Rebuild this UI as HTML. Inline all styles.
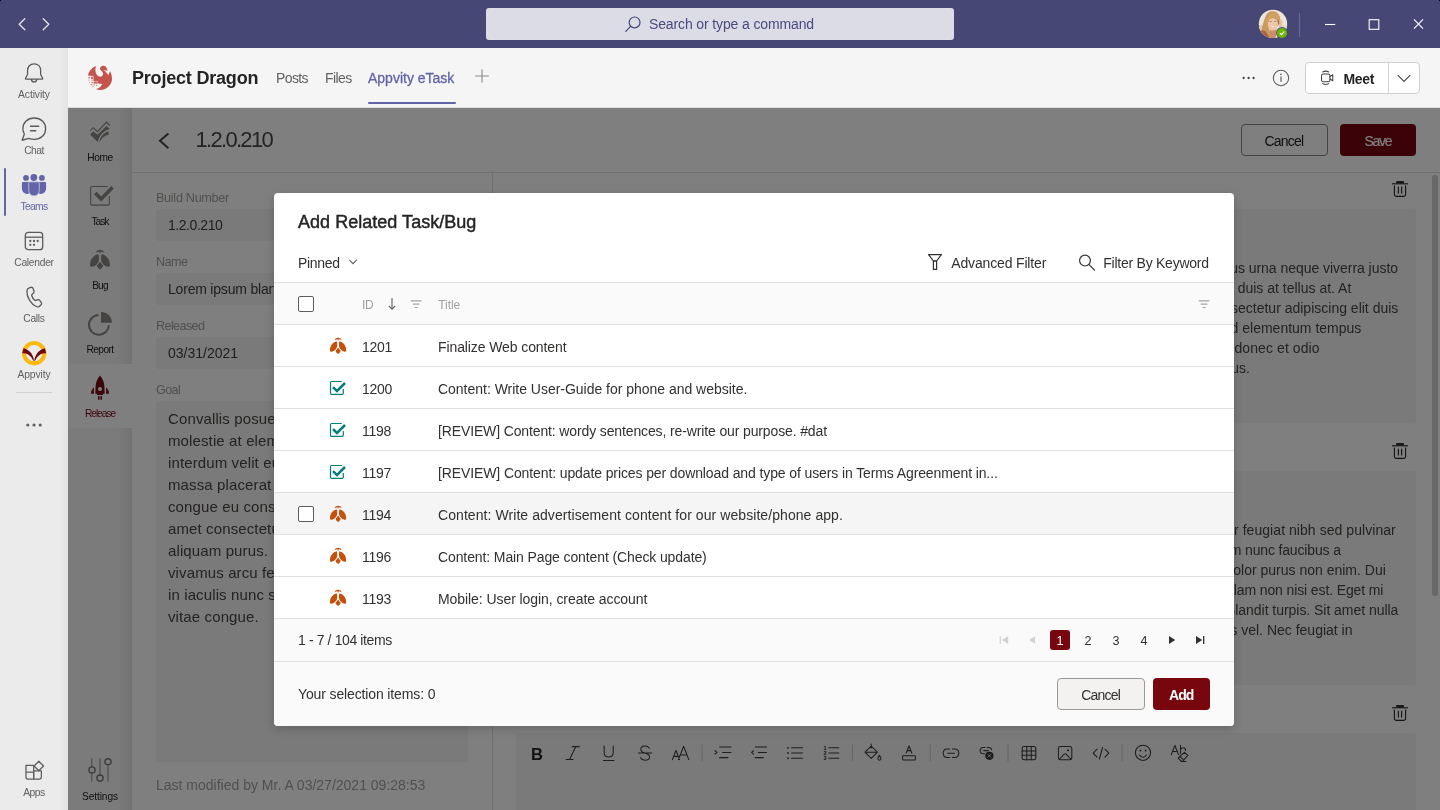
<!DOCTYPE html>
<html>
<head>
<meta charset="utf-8">
<title>Project Dragon</title>
<style>
*{box-sizing:border-box;margin:0;padding:0}
html,body{width:1440px;height:810px;overflow:hidden;background:#f5f5f5}
body{font-family:"Liberation Sans",sans-serif;color:#252423;position:relative}
body>div{will-change:transform}
.abs{position:absolute}
.t{position:absolute;white-space:nowrap;line-height:1}
svg{position:absolute;overflow:visible}
/* top bar */
#top{position:absolute;left:0;top:0;width:1440px;height:48px;background:#464775}
#search{position:absolute;left:486px;top:8px;width:468px;height:32px;background:#dcdce7;border-radius:3px}
/* left rail */
#rail{position:absolute;left:0;top:48px;width:68px;height:762px;background:linear-gradient(90deg,#ebebeb 0,#ebebeb 60px,#e3e3e3 68px)}
.rl{position:absolute;left:0;width:68px;text-align:center;font-size:10.3px;color:#616161;line-height:1;letter-spacing:-0.1px;margin-top:1.9px}
/* channel header */
#chan{position:absolute;left:68px;top:48px;width:1372px;height:60px;background:#f5f5f5}
/* app */
#app{position:absolute;left:68px;top:108px;width:1372px;height:702px;background:#fff;overflow:hidden;color:#403e3d}
#side{position:absolute;left:0;top:0;width:64px;height:702px;background:linear-gradient(90deg,#f6f6f6 0,#f6f6f6 50px,#e4e4e4 64px)}
.sl{position:absolute;left:0;width:64px;text-align:center;font-size:10.2px;color:#252423;line-height:1;letter-spacing:-0.4px;margin-top:2.6px}
#overlay{position:absolute;left:68px;top:108px;width:1372px;height:702px;background:rgba(0,0,0,0.5)}
.inp{position:absolute;left:88px;width:312px;height:32px;background:#f4f4f4;border-radius:3px}
.lbl{position:absolute;left:88px;font-size:12.6px;color:#a3a19f;line-height:1;white-space:nowrap}
.card{position:absolute;left:448px;width:900px;background:#f5f5f5;border-radius:3px}
/* modal */
#modal{position:absolute;left:274px;top:193px;width:960px;height:533px;background:#fff;border-radius:4px;box-shadow:0 3px 10px rgba(0,0,0,0.19);overflow:hidden}
.row{position:absolute;left:0;width:960px;height:42px;border-bottom:1px solid #e0e0e0;background:#fff}
.row .id{position:absolute;left:88px;top:14.9px;font-size:14px;line-height:1;color:#323130}
.row .ti{position:absolute;left:164px;top:14.9px;font-size:14px;line-height:1;color:#323130;white-space:nowrap}
.ct{font-size:14px;color:#484644}
.pg{top:442px;width:20px;text-align:center;font-size:12.6px;color:#323130}
</style>
</head>
<body>
<!-- TOP BAR -->
<div id="top">
  <div class="abs" style="left:0;top:0;width:1px;height:1px;background:#000"></div><div class="abs" style="left:1439px;top:0;width:1px;height:1px;background:#000"></div>
  <svg style="left:0;top:0" width="70" height="48" fill="none" stroke="#e6e6f0" stroke-width="1.3" stroke-linecap="round" stroke-linejoin="round"><path d="M24.8 18.8 L19.2 24.3 L24.8 29.8"/><path d="M43.2 18.8 L48.8 24.3 L43.2 29.8"/></svg>
  <div id="search">
    <svg style="left:138px;top:7px" width="20" height="20" fill="none" stroke="#464775" stroke-width="1.2" stroke-linecap="round"><circle cx="10.6" cy="7.4" r="5.4"/><path d="M6.6 11.4 L1.8 16.3"/></svg>
    <div class="t" style="left:163px;top:9px;font-size:14px;color:#484a7c;letter-spacing:-0.13px">Search or type a command</div>
  </div>
  <!-- avatar -->
  <svg style="left:1255px;top:6px" width="36" height="36" viewBox="0 0 36 36"><defs><clipPath id="avc"><circle cx="18" cy="17.9" r="14.2"/></clipPath></defs>
    <g clip-path="url(#avc)"><rect x="0" y="0" width="36" height="36" fill="#ece5da"/><rect x="0" y="19" width="13" height="17" fill="#dbccb6"/><rect x="24" y="19" width="12" height="17" fill="#e4d8c8"/>
    <ellipse cx="17.6" cy="13.6" rx="7.8" ry="8.4" fill="#c6935a"/>
    <path d="M10.4 11 C8.6 15 7.4 20 6.6 24.4 C7.4 28 10 31.4 14 32.6 L18 32 C15 28 13.4 22 13.6 16 Z" fill="#c9985c"/>
    <path d="M3 27 C5 24.4 8 23.6 10.4 25 C12 27 13.4 30 15 33 L3 33 Z" fill="#a9663d"/>
    <path d="M21 22 C22 26 21.6 29 20.4 32.4 L15 32.6 C14 28 14.6 25 15.4 22 Z" fill="#c98f6c"/>
    <ellipse cx="17.9" cy="18.2" rx="5" ry="6.3" fill="#edc5a8"/>
    <path d="M10.6 17.6 C10.4 10.6 15 6 19.4 6.2 C23.4 6.6 25.4 10.6 24.2 16.4 C23 12.6 20.4 11 17.6 11.4 C14.6 11.8 13 14.2 12.6 18.4 C12.2 20.6 11.4 22.6 10.6 23.6 Z" fill="#d2a063"/>
    <path d="M24.6 13.6 C26.6 13 27.8 14.6 27.4 17 C27.2 19.4 26.4 21.4 24.8 22 C23.8 20 23.8 16.4 24.6 13.6 Z" fill="#e8bda0"/>
    <path d="M23.2 14.6 C24 15.6 24 17.4 23.4 18.4" stroke="#7a4a34" stroke-width="0.7" fill="none"/>
    <ellipse cx="15.6" cy="15.5" rx="1.2" ry="0.6" fill="#9c8672"/><ellipse cx="20.2" cy="15.5" rx="1.2" ry="0.6" fill="#9c8672"/>
    <ellipse cx="17.9" cy="20.6" rx="1.7" ry="0.6" fill="#f7eee8"/></g>
    <circle cx="27" cy="27" r="5.9" fill="#464775"/><circle cx="27" cy="27" r="5.1" fill="#6bb700"/>
    <path d="M25.2 27.3 L26.5 28.6 L28.9 26" fill="none" stroke="#fff" stroke-width="1.2" stroke-linecap="round" stroke-linejoin="round"/></svg>
  <div class="abs" style="left:1299px;top:13px;width:1px;height:24px;background:#6b6c91"></div>
  <svg style="left:1320px;top:14px" width="110" height="20" fill="none" stroke="#fff" stroke-width="1.1"><path d="M5 10.5 H15.2"/><rect x="49.2" y="5.7" width="9.6" height="9.6"/><path d="M94 5.4 L103 14.6 M103 5.4 L94 14.6"/></svg>
</div>
<!-- LEFT RAIL -->
<div id="rail">
  <!-- coordinates inside rail: y = pageY-48 -->
  <!-- Activity bell -->
  <svg style="left:22.9px;top:13.6px" width="22.2" height="24.42" viewBox="0 0 20 22" fill="none" stroke="#5a5a5a" stroke-width="1.15" stroke-linejoin="round" stroke-linecap="round"><path d="M10 1.6 C6.3 1.6 4.1 4.3 4.1 7.6 V11.2 L2.3 14.6 C2.1 15.1 2.4 15.5 2.9 15.5 H17.1 C17.6 15.5 17.9 15.1 17.7 14.6 L15.9 11.2 V7.6 C15.9 4.3 13.7 1.6 10 1.6 Z"/><path d="M7.6 15.8 C7.8 17.1 8.8 17.9 10 17.9 C11.2 17.9 12.2 17.1 12.4 15.8"/></svg>
  <div class="rl" style="top:40px">Activity</div>
  <!-- Chat -->
  <svg style="left:18.95px;top:67.65px" width="30" height="30" viewBox="0 0 24 24" fill="none" stroke="#5a5a5a" stroke-width="1.05" stroke-linejoin="round" stroke-linecap="round"><path d="M12.2 1.6 C6.9 1.6 3.1 5.3 3.1 10.1 C3.1 11.7 3.5 13.1 4.3 14.4 L2.5 19.4 L7.8 17.9 C9.1 18.5 10.6 18.7 12.2 18.7 C17.5 18.7 21.3 15 21.3 10.1 C21.3 5.3 17.5 1.6 12.2 1.6 Z"/><path d="M9.2 8.2 H15.8 M9.2 11.8 H13.4"/></svg>
  <div class="rl" style="top:96px;letter-spacing:-0.55px">Chat</div>
  <!-- Teams active -->
  <div class="abs" style="left:4px;top:120px;width:2px;height:48px;background:#6264a7;border-radius:1px"></div>
  <svg style="left:21px;top:125px" width="26" height="24" fill="#6264a7"><circle cx="12.85" cy="4.5" r="3.4"/><circle cx="5" cy="4.9" r="2.9"/><circle cx="20.9" cy="4.9" r="2.9"/><path d="M2.1 9.1 H8 V20.6 C7.2 20.9 6.3 21 5.6 20.9 C3 20.6 0.9 18.6 0.9 15.6 V10.3 C0.9 9.6 1.4 9.1 2.1 9.1 Z"/><path d="M23.9 9.1 H18 V20.6 C18.8 20.9 19.7 21 20.4 20.9 C23 20.6 25.1 18.6 25.1 15.6 V10.3 C25.1 9.6 24.6 9.1 23.9 9.1 Z"/><path d="M8.9 8.9 H17.1 C17.8 8.9 18.3 9.4 18.3 10.1 V17.4 C18.3 20.4 15.9 22.8 13 22.8 C10.1 22.8 7.7 20.4 7.7 17.4 V10.1 C7.7 9.4 8.2 8.9 8.9 8.9 Z" stroke="#b4b5d6" stroke-width="1"/></svg>
  <div class="rl" style="top:152px;color:#6264a7;letter-spacing:-0.7px">Teams</div>
  <!-- Calendar -->
  <svg style="left:24px;top:183px" width="20" height="20" fill="none" stroke="#5a5a5a" stroke-width="1.3"><rect x="1.3" y="1.3" width="17.4" height="17.4" rx="3"/><path d="M1.3 6.2 H18.7"/><g fill="#5f5f5f" stroke="none"><circle cx="6.3" cy="10" r="1.15"/><circle cx="10" cy="10" r="1.15"/><circle cx="13.7" cy="10" r="1.15"/><circle cx="6.3" cy="13.8" r="1.15"/><circle cx="10" cy="13.8" r="1.15"/></g></svg>
  <div class="rl" style="top:208px;letter-spacing:-0.3px">Calender</div>
  <!-- Calls -->
  <svg style="left:24px;top:238px" width="20" height="22" fill="none" stroke="#5a5a5a" stroke-width="1.3" stroke-linejoin="round"><path d="M5.2 1.9 L7.1 1.3 C7.9 1.1 8.7 1.5 9 2.3 L10 5.2 C10.2 5.9 10 6.6 9.5 7.1 L8 8.4 C7.7 8.7 7.6 9.1 7.7 9.5 C8.1 11.3 9.3 13.1 10.9 14.3 C11.2 14.5 11.6 14.6 12 14.4 L13.9 13.7 C14.6 13.5 15.3 13.7 15.7 14.3 L17.3 16.6 C17.8 17.3 17.7 18.2 17.1 18.8 L16.1 19.8 C15.1 20.8 13.6 21.1 12.3 20.5 C6.9 18.1 2.6 10.9 2.9 5 C3 3.5 3.9 2.3 5.2 1.9 Z"/></svg>
  <div class="rl" style="top:264px;letter-spacing:-0.3px">Calls</div>
  <!-- Appvity -->
  <svg style="left:21.7px;top:293px" width="24.4" height="24.4" viewBox="0 0 24.4 24.4"><circle cx="12.2" cy="12.2" r="10.15" fill="none" stroke="#fdb913" stroke-width="4.1"/><path d="M1.5 7.2 Q6.6 8.4 9.5 12.6 Q11.3 15.4 12.2 19.8 Q13.1 15.4 14.9 12.6 Q17.8 8.4 22.9 7.2 L24.2 12.3 Q20.8 12 18.2 13.4 Q15.4 15 13.4 19.3 L12.2 19.9 L11 19.3 Q9 15 6.2 13.4 Q3.6 12 0.2 12.3 Z" fill="#6e0a12"/></svg>
  <div class="rl" style="top:320px">Appvity</div>
  <div class="abs" style="left:16px;top:344px;width:36px;height:1px;background:#d1d1d1"></div>
  <svg style="left:24px;top:372px" width="20" height="10" fill="#5f5f5f"><circle cx="3.8" cy="5" r="1.55"/><circle cx="10" cy="5" r="1.55"/><circle cx="16.2" cy="5" r="1.55"/></svg>
  <!-- Apps -->
  <svg style="left:22.6px;top:711px" width="23.4" height="22.6" viewBox="0 0 22 22" fill="none" stroke="#5f5f5f" stroke-width="1.25" stroke-linejoin="round"><path d="M2.5 6.2 H10 V19.5 H4.5 C3.4 19.5 2.5 18.6 2.5 17.5 Z"/><path d="M10 11.5 H17.5 V17.5 C17.5 18.6 16.6 19.5 15.5 19.5 H10 Z"/><path d="M2.5 12.8 H10"/><path d="M15 2.2 L19.6 6.8 L15 11.4 L10.4 6.8 Z"/></svg>
  <div class="rl" style="top:738px;letter-spacing:-0.5px">Apps</div>
</div>
<!-- CHANNEL HEADER -->
<div id="chan">
  <!-- logo -->
  <svg style="left:16px;top:14px" width="32" height="32" viewBox="0 0 32 32"><path d="M4 13.6 C4.6 9.6 7.6 5.6 12.2 4 C11 6.6 11 9.6 12.4 12 C13.6 14 15.4 14.9 17 14.6 C18.8 14.2 19.6 12.4 18.8 10.6 C18.2 9.4 16.8 8.8 16.2 7.6 C15.6 6.2 16.4 4.6 18.2 4 C20.4 3.4 22.4 4.8 23 7 L23.9 8.5 L21.6 8.4 L19.4 7.8 L21.4 9.4 C22.4 10.4 23.4 11.8 24.4 13.2 C24.8 11.8 25.2 10.4 26 9.2 C27.4 11.4 28.2 14.6 28 17.6 C27.6 21.6 25 25.4 21 27 C18 28.2 14.6 28.2 11.8 27.2 C14.6 26.6 17 24.8 18.2 22 L14 21.6 V19 H9.5 V13.9 Z" fill="#c4554d"/><g fill="#d98c86"><rect x="4.3" y="14.8" width="1.8" height="1.6"/><rect x="7" y="14.8" width="2.2" height="2.2" fill="#cf6f68"/><rect x="4.4" y="17.6" width="1.2" height="1"/><rect x="7" y="17.6" width="1.8" height="1"/><rect x="5" y="20" width="1" height="1"/><rect x="7.4" y="19.8" width="2" height="1.6"/><rect x="9.8" y="19.4" width="4" height="2.2" fill="#cb645d"/><rect x="6.4" y="22.3" width="2.2" height="1"/><rect x="9.4" y="22.5" width="1.6" height="1"/><rect x="12" y="22.8" width="1.2" height="1" fill="#cf6f68"/><rect x="8.2" y="24.3" width="1.4" height="0.9"/></g></svg>
  <div class="t" style="left:64px;top:21px;font-size:18px;font-weight:700;color:#242424;letter-spacing:-0.2px">Project Dragon</div>
  <div class="t" style="left:208px;top:23.4px;font-size:14px;color:#616161;letter-spacing:-0.6px">Posts</div>
  <div class="t" style="left:257px;top:23.4px;font-size:14px;color:#616161;letter-spacing:-0.6px">Files</div>
  <div class="t" style="left:300px;top:23.4px;font-size:14px;color:#6264a7;letter-spacing:0px;-webkit-text-stroke:0.3px #6264a7">Appvity eTask</div>
  <div class="abs" style="left:300px;top:53.5px;width:88px;height:2.6px;border-radius:1.3px;background:#6264a7"></div>
  <svg style="left:406px;top:20px" width="16" height="16" stroke="#8a8a8a" stroke-width="1.1" fill="none"><path d="M8 1.2 V14.8 M1.2 8 H14.8"/></svg>
  <!-- right controls -->
  <svg style="left:1172px;top:26px" width="18" height="8" fill="#424242"><circle cx="3.6" cy="4" r="1.15"/><circle cx="8.6" cy="4" r="1.15"/><circle cx="13.6" cy="4" r="1.15"/></svg>
  <svg style="left:1204px;top:21px" width="18" height="18" fill="none" stroke="#5c5c5c" stroke-width="1.05"><circle cx="9" cy="9" r="7.7"/><path d="M9 7.6 V12.8" stroke-width="1.2"/><circle cx="9" cy="5.4" r="0.8" fill="#5c5c5c" stroke="none"/></svg>
  <div class="abs" style="left:1237px;top:14px;width:115px;height:32px;border:1px solid #d1d1d1;border-radius:4px;background:#fff"></div>
  <div class="abs" style="left:1320px;top:14px;width:1px;height:32px;background:#d1d1d1"></div>
  <svg style="left:1250.2px;top:21.2px" width="17.6" height="17.6" viewBox="0 0 20 20" fill="none" stroke="#424242" stroke-width="1.2" stroke-linejoin="round" stroke-linecap="round"><rect x="4" y="5.6" width="9.6" height="8.8" rx="2"/><path d="M13.6 8.6 L16.8 6.6 V13.4 L13.6 11.4"/><path d="M5.4 3.4 C7.4 2.2 10.2 2.2 12.2 3.4"/><path d="M5.4 16.6 C7.4 17.8 10.2 17.8 12.2 16.6"/></svg>
  <div class="t" style="left:1275.5px;top:23.7px;font-size:14px;font-weight:700;color:#242424;letter-spacing:-0.3px">Meet</div>
  <svg style="left:1328px;top:24px" width="16" height="12" fill="none" stroke="#424242" stroke-width="1.1" stroke-linecap="round" stroke-linejoin="round"><path d="M2 3.4 L8 9.4 L14 3.4"/></svg>
  <div class="abs" style="left:0;top:59px;width:1372px;height:1px;background:#dcdcdc"></div>
</div>
<!-- APP -->
<div id="app">
  <div id="side">
    <div class="abs" style="left:0;top:256px;width:64px;height:64px;background:#fff"></div>
    <!-- home -->
    <svg style="left:16px;top:8px" width="32" height="32" viewBox="0 0 32 32" fill="#8a8886"><path d="M6.1 14.6 L9.3 11.7 L13.4 15.6 L22.5 6.1 L25.7 9.5" fill="none" stroke="#8a8886" stroke-width="1.1"/><path d="M6.1 18.4 L9.3 15.2 L13.4 18.8 L22.5 10 L25.7 13 C20 14.4 15.8 18.6 13.9 25.2 L13.2 25.6 Z"/><path d="M15.4 25.4 C16.6 20 20 16.6 24.4 15.4 L24.9 18.6 C20.6 19.4 17.6 21.8 15.9 25.6 Z"/></svg>
    <div class="sl" style="top:42.5px">Home</div>
    <!-- task -->
    <svg style="left:16px;top:72px" width="32" height="32" viewBox="0 0 32 32" fill="#8a8886"><path d="M23.7 6.55 H8 C7.2 6.55 6.65 7.1 6.65 7.9 V23.8 C6.65 24.6 7.2 25.15 8 25.15 H24 C24.8 25.15 25.35 24.6 25.35 23.8 V16" fill="none" stroke="#8a8886" stroke-width="1.1"/><path d="M10 14.2 L12.5 11.7 L17.2 16.4 L27.3 6.1 L29.8 8.7 L17.2 21.5 Z"/></svg>
    <div class="sl" style="top:106.5px;letter-spacing:-1.0px">Task</div>
    <!-- bug -->
    <svg style="left:16px;top:136px" width="32" height="32" viewBox="0 0 32 32" fill="#8a8886"><path d="M14.3 10 C10 11 6 15.4 6.1 21 C6.1 22.4 7 23 8.2 22.8 C11.6 22 14.2 19.6 14.8 16.4 C15.1 14.4 15 11.6 14.3 10 Z"/><path d="M17.7 10 C22 11 26 15.4 25.9 21 C25.9 22.4 25 23 23.8 22.8 C20.4 22 17.8 19.6 17.2 16.4 C16.9 14.4 17 11.6 17.7 10 Z"/><path d="M16 17.6 C17 19.4 18.2 20.6 19.3 21.6 C18.6 23.4 17.4 24.8 16 25.8 C14.6 24.8 13.4 23.4 12.7 21.6 C13.8 20.6 15 19.4 16 17.6 Z"/><path d="M11.7 8.8 C12.4 6.6 14.2 5.8 16 5.8 C17.8 5.8 19.6 6.6 20.3 8.8 C19 8 17.6 7.7 16.6 7.7 L16.6 9.2 L15.4 9.2 L15.4 7.7 C14.4 7.7 13 8 11.7 8.8 Z"/></svg>
    <div class="sl" style="top:170.5px;letter-spacing:-0.8px">Bug</div>
    <!-- report -->
    <svg style="left:16px;top:200px" width="32" height="32" viewBox="0 0 32 32" fill="#8a8886"><path d="M14.6 7 A9.9 9.9 0 1 0 24.8 17.2" fill="none" stroke="#8a8886" stroke-width="2"/><path d="M17 14.8 V3.9 A10.9 10.9 0 0 1 27.9 14.8 Z"/></svg>
    <div class="sl" style="top:234.5px;letter-spacing:-0.6px">Report</div>
    <!-- release -->
    <svg style="left:16px;top:264px" width="32" height="32" viewBox="0 0 32 32" fill="#780a14"><path d="M16 3.6 C18.6 6.6 20.2 10.4 20.4 14.4 L20.7 21.7 H19 V22.9 H13 V21.7 H11.3 L11.6 14.4 C11.8 10.4 13.4 6.6 16 3.6 Z"/><path d="M9.9 15.6 C8 17 7 19.2 7 21.7 H9.9 Z"/><path d="M22.1 15.6 C24 17 25 19.2 25 21.7 H22.1 Z"/><rect x="14" y="24.1" width="1.3" height="3.6"/><rect x="16.7" y="24.1" width="1.3" height="3.6"/><rect x="15.3" y="24.1" width="1.4" height="3.6" opacity="0.55"/><circle cx="16" cy="16.9" r="2" fill="#fff"/></svg>
    <div class="sl" style="top:298.5px;color:#780a14;letter-spacing:-1.05px">Release</div>
    <!-- settings -->
    <svg style="left:16px;top:644px" width="32" height="36" viewBox="16 644 32 36" fill="none" stroke="#8a8886" stroke-width="1"><path d="M23.8 650.3 V658.6 M23.8 665.4 V673.7 M32 650.3 V666.7 M32 673.4 V673.8 M40 657.2 V673.7"/><g stroke="#7a7876" stroke-width="1.35"><circle cx="24" cy="662" r="3.1"/><circle cx="32" cy="670.1" r="3.1"/><circle cx="40" cy="653.8" r="3.1"/></g></svg>
    <div class="sl" style="top:681.5px;letter-spacing:-0.1px">Settings</div>
  </div>
  <!-- header -->
  <svg style="left:88px;top:22.5px" width="16" height="20" fill="none" stroke="#484644" stroke-width="2"><path d="M12.4 2.4 L4 9.8 L12.4 17.2"/></svg>
  <div class="t" style="left:127.5px;top:21px;font-size:22px;color:#484644;letter-spacing:-1.7px">1.2.0.210</div>
  <div class="abs" style="left:1173px;top:16px;width:87px;height:32px;border:1px solid #8a8886;border-radius:4px"></div>
  <div class="t" style="left:1196.5px;top:25.6px;font-size:14px;color:#252423;letter-spacing:-0.8px">Cancel</div>
  <div class="abs" style="left:1272px;top:16px;width:76px;height:32px;background:#760610;border-radius:4px"></div>
  <div class="t" style="left:1296.5px;top:25.6px;font-size:14px;color:#fff;letter-spacing:-1.3px;-webkit-text-stroke:0.15px #fff">Save</div>
  <div class="abs" style="left:64px;top:64px;width:1308px;height:1px;background:#e1dfdd"></div>
  <div class="abs" style="left:424px;top:65px;width:1px;height:640px;background:#e1dfdd"></div>
  <!-- left form -->
  <div class="lbl" style="top:84px;letter-spacing:-0.28px">Build Number</div>
  <div class="inp" style="top:101px"></div>
  <div class="t" style="left:100px;top:110px;font-size:14px;letter-spacing:-0.45px">1.2.0.210</div>
  <div class="lbl" style="top:148px;letter-spacing:-0.5px">Name</div>
  <div class="inp" style="top:165px"></div>
  <div class="t" style="left:100px;top:174px;font-size:14px;letter-spacing:-0.2px">Lorem ipsum blandit volutpat</div>
  <div class="lbl" style="top:212px;letter-spacing:-0.6px">Released</div>
  <div class="inp" style="top:229px"></div>
  <div class="t" style="left:100px;top:238px;font-size:14px;letter-spacing:0px">03/31/2021</div>
  <div class="lbl" style="top:276px;letter-spacing:-0.6px">Goal</div>
  <div class="inp" style="top:293px;height:361px"></div>
  <div class="t" style="left:100px;top:303.0px;font-size:15px;color:#484644;letter-spacing:0.12px">Convallis posuere morbi leo urna</div>
  <div class="t" style="left:100px;top:325.0px;font-size:15px;color:#484644;letter-spacing:0.12px">molestie at elementum eu facilisis</div>
  <div class="t" style="left:100px;top:347.0px;font-size:15px;color:#484644;letter-spacing:0.12px">interdum velit euismod in pellentes</div>
  <div class="t" style="left:100px;top:369.0px;font-size:15px;color:#484644;letter-spacing:0.12px">massa placerat</div>
  <div class="t" style="left:100px;top:391.0px;font-size:15px;color:#484644;letter-spacing:0.12px">congue eu consequat ac felis donec</div>
  <div class="t" style="left:100px;top:413.0px;font-size:15px;color:#484644;letter-spacing:0.12px">amet consectetur adipiscing elit ut</div>
  <div class="t" style="left:100px;top:435.0px;font-size:15px;color:#484644;letter-spacing:0.12px">aliquam purus.</div>
  <div class="t" style="left:100px;top:457.0px;font-size:15px;color:#484644;letter-spacing:0.12px">vivamus arcu felis bibendum ut</div>
  <div class="t" style="left:100px;top:479.0px;font-size:15px;color:#484644;letter-spacing:0.12px">in iaculis nunc sed augue lacus</div>
  <div class="t" style="left:100px;top:501.0px;font-size:15px;color:#484644;letter-spacing:0.12px">vitae congue.</div>
  <div class="t" style="left:88px;top:669.6px;font-size:14px;color:#a3a19f">Last modified by Mr. A 03/27/2021 09:28:53</div>
  <!-- right cards -->
  <svg style="left:1323px;top:72px" width="18" height="18" fill="none" stroke="#252423" stroke-width="1.1"><path d="M1 3.8 H17"/><path d="M5.2 2.2 H12.9" stroke-width="2.2"/><path d="M3.4 5.4 V14.6 C3.4 15.6 4.2 16.4 5.2 16.4 H12.8 C13.8 16.4 14.6 15.6 14.6 14.6 V5.4"/><path d="M7.4 6.8 V13.6 M10.6 6.8 V13.6"/></svg>
  <div class="card" style="top:101px;height:214px"></div>
  <svg style="left:1323px;top:334px" width="18" height="18" fill="none" stroke="#252423" stroke-width="1.1"><path d="M1 3.8 H17"/><path d="M5.2 2.2 H12.9" stroke-width="2.2"/><path d="M3.4 5.4 V14.6 C3.4 15.6 4.2 16.4 5.2 16.4 H12.8 C13.8 16.4 14.6 15.6 14.6 14.6 V5.4"/><path d="M7.4 6.8 V13.6 M10.6 6.8 V13.6"/></svg>
  <div class="card" style="top:363px;height:214px"></div>
  <svg style="left:1323px;top:596px" width="18" height="18" fill="none" stroke="#252423" stroke-width="1.1"><path d="M1 3.8 H17"/><path d="M5.2 2.2 H12.9" stroke-width="2.2"/><path d="M3.4 5.4 V14.6 C3.4 15.6 4.2 16.4 5.2 16.4 H12.8 C13.8 16.4 14.6 15.6 14.6 14.6 V5.4"/><path d="M7.4 6.8 V13.6 M10.6 6.8 V13.6"/></svg>
  <div class="card" style="top:625px;height:100px"></div>
  <div class="t ct" style="right:42.0px;top:152.7px;letter-spacing:-0.04px">Lorem ipsum dolor sit amet, consectetur adipiscing elit, sed do eiusmod tempor incididunt ut labore. Cursus risus urna neque viverra justo</div>
  <div class="t ct" style="right:88.7px;top:172.7px">nec ultrices dui sapien eget mi proin. Egestas maecenas pharetra convallis posuere morbi. Amet duis at tellus at. At</div>
  <div class="t ct" style="right:41.7px;top:192.7px">varius vel pharetra vel turpis nunc eget lorem dolor. Dolor sit amet consectetur adipiscing elit duis</div>
  <div class="t ct" style="right:78.7px;top:212.7px">tristique sollicitudin nibh sit amet. Pellentesque id elementum tempus</div>
  <div class="t ct" style="right:120.3px;top:232.7px;letter-spacing:0.09px">egestas sed sed risus pretium quam. Eu scelerisque donec et odio</div>
  <div class="t ct" style="right:190.0px;top:252.7px">pellentesque diam volutpat commodo sed egestas purus.</div>
  <div class="t ct" style="right:44.2px;top:414.9px;letter-spacing:0.055px">Amet consectetur adipiscing elit pellentesque habitant morbi tristique senectus. Tempor feugiat nibh sed pulvinar</div>
  <div class="t ct" style="right:99.2px;top:434.9px;letter-spacing:-0.15px">proin gravida hendrerit lectus. Sed viverra ipsum nunc aliquet bibendum enim nunc faucibus a</div>
  <div class="t ct" style="right:54.2px;top:454.9px">pellentesque sit amet porttitor eget dolor morbi. Aliquam ut porttitor leo. Dolor purus non enim. Dui</div>
  <div class="t ct" style="right:56.7px;top:474.9px;letter-spacing:-0.12px">faucibus in ornare quam viverra orci sagittis eu volutpat. Nullam non nisi est. Eget mi</div>
  <div class="t ct" style="right:41.7px;top:494.9px;letter-spacing:-0.04px">proin sed libero enim sed faucibus turpis in eu mi bibendum. Blandit turpis. Sit amet nulla</div>
  <div class="t ct" style="right:87.5px;top:514.9px">facilisi morbi tempus iaculis urna id volutpat lacus vel. Nec feugiat in</div>
  <!-- scrollbar -->
  <div class="abs" style="left:1364px;top:67px;width:6px;height:421px;border-radius:3px;background:#d0d0d0"></div>
  <svg style="left:0;top:0" width="1372" height="702" viewBox="68 108 1372 702" fill="none" stroke="#3b3a39" stroke-width="1.05" stroke-linecap="round" stroke-linejoin="round" font-family="Liberation Sans, sans-serif">
    <text x="537" y="759.5" text-anchor="middle" font-size="16.6" font-weight="700" fill="#252423" stroke="none">B</text>
    <path d="M575.8 746.6 L569.6 759.4 M572.2 746.6 H579.4 M566 759.4 H573.2"/>
    <path d="M604.2 746 V752.4 C604.2 755.2 606 757 608.7 757 C611.4 757 613.2 755.2 613.2 752.4 V746 M603.4 760.4 H614"/>
    <path d="M649.4 748.2 C648.4 746.8 646.8 746 645 746 C642.6 746 640.8 747.4 640.8 749.4 C640.8 751.2 642 752.2 645 753 C648 753.8 649.6 754.8 649.6 756.8 C649.6 758.8 647.6 760.2 645 760.2 C643 760.2 641.4 759.4 640.4 757.8 M638.4 753 H651.8"/>
    <path d="M672.4 759.6 L676 750.4 L679.6 759.6 M673.8 756.4 H678.2 M678.4 759.6 L683.6 746.4 L688.8 759.6 M680.4 755 H686.8" stroke-width="1.1"/>
    <path d="M702 745 V761 M852.4 745 V761 M930.2 745 V761 M1008 745 V761 M1122 745 V761" stroke="#c8c6c4" stroke-width="1"/>
    <path d="M715 750.6 L717 752.4 L715 754.2 M719.6 747 H731 M722.6 752.4 H731 M719.6 757.6 H728"/>
    <path d="M753.6 750.6 L751.6 752.4 L753.6 754.2 M755.2 747 H766.6 M758.4 752.4 H766.6 M755.2 757.6 H763.4"/>
    <path d="M791.6 747.8 H802.6 M791.6 753 H802.6 M791.6 758.2 H802.6"/>
    <g fill="#3b3a39" stroke="none"><circle cx="788" cy="747.8" r="0.9"/><circle cx="788" cy="753" r="0.9"/><circle cx="788" cy="758.2" r="0.9"/></g>
    <path d="M828.8 747.8 H838.8 M828.8 753 H838.8 M828.8 758.2 H838.8"/>
    <g fill="#323130" stroke="none" font-size="5.6" font-weight="700"><text x="823.4" y="749.6">1</text><text x="823.4" y="755">2</text><text x="823.4" y="760.4">3</text></g>
    <!-- bucket -->
    <path d="M871.2 744 V748 M871.2 746 L865 752.2 L871.2 758.4 L877.4 752.2 Z M865.4 752.2 H877"/>
    <path d="M879.4 755.4 C878.4 756.8 877.8 757.8 877.8 758.6 C877.8 759.5 878.5 760.2 879.4 760.2 C880.3 760.2 881 759.5 881 758.6 C881 757.8 880.4 756.8 879.4 755.4 Z"/>
    <!-- A color -->
    <path d="M906.2 753 L909 746 L911.8 753 M907.2 750.6 H910.8" stroke-width="1.05"/>
    <rect x="902.6" y="755.8" width="12.8" height="4.2" rx="0.8"/>
    <!-- link -->
    <path d="M949.6 749 H947.4 C945 749 943.2 750.8 943.2 753.2 C943.2 755.6 945 757.4 947.4 757.4 H949.6 M952.4 749 H954.6 C957 749 958.8 750.8 958.8 753.2 C958.8 755.6 957 757.4 954.6 757.4 H952.4 M947.6 753.2 H954.4"/>
    <!-- unlink -->
    <path d="M985 747.4 H983.4 C981.6 747.4 980.2 748.8 980.2 750.6 C980.2 752.4 981.6 753.8 983.4 753.8 H984.6 M987 747.4 H988.6 C990.2 747.4 991.4 748.4 991.7 749.8 M983.6 750.6 H988.4"/>
    <circle cx="989.4" cy="755.8" r="4.1" fill="#323130" stroke="none"/>
    <path d="M987.8 754.2 L991 757.4 M991 754.2 L987.8 757.4" stroke="#f3f2f1" stroke-width="0.9"/>
    <!-- table -->
    <rect x="1022.2" y="746.4" width="13.6" height="13.4" rx="1.8"/>
    <path d="M1026.8 746.4 V759.8 M1031.2 746.4 V759.8 M1022.2 750.9 H1035.8 M1022.2 755.3 H1035.8"/>
    <!-- image -->
    <rect x="1058.4" y="746.4" width="13.4" height="13.4" rx="2"/>
    <circle cx="1068" cy="750.2" r="1" fill="#323130" stroke="none"/>
    <path d="M1059.6 759 L1064.2 754.2 C1064.7 753.7 1065.5 753.7 1066 754.2 L1070.8 759"/>
    <!-- code -->
    <path d="M1097 749.2 L1093.2 753.2 L1097 757.2 M1105 749.2 L1108.8 753.2 L1105 757.2 M1102.6 747.4 L1099.4 759"/>
    <!-- emoji -->
    <circle cx="1143" cy="752.8" r="7.6"/>
    <circle cx="1140.4" cy="750.6" r="0.95" fill="#323130" stroke="none"/><circle cx="1145.6" cy="750.6" r="0.95" fill="#323130" stroke="none"/>
    <path d="M1139.4 755 C1140.4 756.6 1141.6 757.2 1143 757.2 C1144.4 757.2 1145.6 756.6 1146.6 755"/>
    <!-- clear format -->
    <path d="M1171.3 754.6 L1174.9 745.5 L1178.5 754.6 M1172.8 751.4 H1177" stroke-width="1.05"/>
    <path d="M1180.5 745.2 V753.6 M1180.5 750 C1180.8 748.6 1181.9 747.8 1183.2 747.8 C1184.8 747.8 1185.6 749 1185.6 750.6" stroke-width="1.05"/>
    <path d="M1184.4 752.3 L1187.9 755.3 L1182.8 761 L1181 761.2 L1178.2 758.2 Z" fill="#f3f2f1" stroke-width="1.05"/>
    <path d="M1179.8 756.4 L1183.6 759.9 M1181.2 761.5 H1186" stroke-width="1.05"/>
  </svg>
</div>
<div id="overlay"></div>
<!-- MODAL -->
<div id="modal">
  <div class="t" style="left:24px;top:19.6px;font-size:18px;font-weight:400;color:#242424;letter-spacing:0.03px;-webkit-text-stroke:0.45px #242424">Add Related Task/Bug</div>
  <div class="t" style="left:24px;top:63px;font-size:14px;color:#323130;letter-spacing:-0.3px">Pinned</div>
  <svg style="left:74px;top:65px" width="10" height="8" fill="none" stroke="#605e5c" stroke-width="1.1"><path d="M1.3 1.8 L5 5.7 L8.7 1.8"/></svg>
  <!-- advanced filter -->
  <svg style="left:653px;top:60px" width="16" height="18" fill="none" stroke="#323130" stroke-width="1.2" stroke-linejoin="round"><path d="M1.6 1.6 H14.4 L9.6 8 H6.4 Z"/><rect x="6.4" y="8" width="3.2" height="8.4"/></svg>
  <div class="t" style="left:677.3px;top:63.2px;font-size:14px;color:#323130;letter-spacing:-0.16px">Advanced Filter</div>
  <svg style="left:804px;top:61px" width="18" height="18" fill="none" stroke="#323130" stroke-width="1.2" stroke-linecap="round"><circle cx="7" cy="6.6" r="5.4"/><path d="M11 10.6 L16.6 16.2"/></svg>
  <div class="t" style="left:829.3px;top:63.2px;font-size:14px;color:#323130;letter-spacing:-0.25px">Filter By Keyword</div>
  <!-- header -->
  <div class="abs" style="left:0;top:89px;width:960px;height:43px;background:#fafafa;border-top:1px solid #e0e0e0;border-bottom:1px solid #e0e0e0"></div>
  <div class="abs" style="left:24px;top:103px;width:16px;height:16px;border:1px solid #605e5c;border-radius:2px;background:#fff"></div>
  <div class="t" style="left:88px;top:105.6px;font-size:12px;color:#a19f9d;letter-spacing:-0.4px">ID</div>
  <svg style="left:112px;top:104px" width="12" height="14" fill="none" stroke="#605e5c" stroke-width="1.1"><path d="M6 1 V12"/><path d="M2.8 8.8 L6 12.2 L9.2 8.8" stroke-width="1.2"/></svg>
  <svg style="left:136px;top:105px" width="12" height="12" stroke="#a6a4a2" stroke-width="1.2"><path d="M0.7 2.8 H11.5 M2.8 6.2 H9.4 M4.6 9.5 H7.6"/></svg>
  <div class="t" style="left:164.3px;top:105.6px;font-size:12px;color:#a19f9d;letter-spacing:-0.1px">Title</div>
  <svg style="left:924px;top:105px" width="12" height="12" stroke="#a6a4a2" stroke-width="1.2"><path d="M0.7 2.8 H11.5 M2.8 6.2 H9.4 M4.6 9.5 H7.6"/></svg>
  <div class="row" style="top:132px"><svg style="left:50.8px;top:8.3px" width="26.2" height="26.2" viewBox="0 0 32 32" fill="#c3520e"><path d="M14.3 10 C10 11 6 15.4 6.1 21 C6.1 22.4 7 23 8.2 22.8 C11.6 22 14.2 19.6 14.8 16.4 C15.1 14.4 15 11.6 14.3 10 Z"/><path d="M17.7 10 C22 11 26 15.4 25.9 21 C25.9 22.4 25 23 23.8 22.8 C20.4 22 17.8 19.6 17.2 16.4 C16.9 14.4 17 11.6 17.7 10 Z"/><path d="M16 17.6 C17 19.4 18.2 20.6 19.3 21.6 C18.6 23.4 17.4 24.8 16 25.8 C14.6 24.8 13.4 23.4 12.7 21.6 C13.8 20.6 15 19.4 16 17.6 Z"/><path d="M11.7 8.8 C12.4 6.6 14.2 5.8 16 5.8 C17.8 5.8 19.6 6.6 20.3 8.8 C19 8 17.6 7.7 16.6 7.7 L16.6 9.2 L15.4 9.2 L15.4 7.7 C14.4 7.7 13 8 11.7 8.8 Z"/></svg><div class="id" style="letter-spacing:-0.25px">1201</div><div class="ti" style="letter-spacing:-0.1px">Finalize Web content</div></div>
  <div class="row" style="top:174px"><svg style="left:48px;top:5px" width="32" height="32" viewBox="0 0 32 32" fill="#057d7d"><path d="M19.8 9.5 H9.6 C8.9 9.5 8.5 9.9 8.5 10.6 V21.2 C8.5 21.9 8.9 22.3 9.6 22.3 H20.2 C20.9 22.3 21.3 21.9 21.3 21.2 V17" fill="none" stroke="#057d7d" stroke-width="1.2"/><path d="M10.1 16 L11.9 14.2 L15 17.2 L22.1 10.1 L23.9 11.9 L15 20.7 Z"/></svg><div class="id" style="letter-spacing:-0.25px">1200</div><div class="ti" style="letter-spacing:-0.02px">Content: Write User-Guide for phone and website.</div></div>
  <div class="row" style="top:216px"><svg style="left:48px;top:5px" width="32" height="32" viewBox="0 0 32 32" fill="#057d7d"><path d="M19.8 9.5 H9.6 C8.9 9.5 8.5 9.9 8.5 10.6 V21.2 C8.5 21.9 8.9 22.3 9.6 22.3 H20.2 C20.9 22.3 21.3 21.9 21.3 21.2 V17" fill="none" stroke="#057d7d" stroke-width="1.2"/><path d="M10.1 16 L11.9 14.2 L15 17.2 L22.1 10.1 L23.9 11.9 L15 20.7 Z"/></svg><div class="id" style="letter-spacing:-0.25px">1198</div><div class="ti" style="letter-spacing:-0.13px">[REVIEW] Content: wordy sentences, re-write our purpose. #dat</div></div>
  <div class="row" style="top:258px"><svg style="left:48px;top:5px" width="32" height="32" viewBox="0 0 32 32" fill="#057d7d"><path d="M19.8 9.5 H9.6 C8.9 9.5 8.5 9.9 8.5 10.6 V21.2 C8.5 21.9 8.9 22.3 9.6 22.3 H20.2 C20.9 22.3 21.3 21.9 21.3 21.2 V17" fill="none" stroke="#057d7d" stroke-width="1.2"/><path d="M10.1 16 L11.9 14.2 L15 17.2 L22.1 10.1 L23.9 11.9 L15 20.7 Z"/></svg><div class="id" style="letter-spacing:-0.25px">1197</div><div class="ti" style="letter-spacing:-0.11px">[REVIEW] Content: update prices per download and type of users in Terms Agreenment in...</div></div>
  <div class="row" style="top:300px;background:#f5f5f5"><div class="abs" style="left:24px;top:13px;width:16px;height:16px;border:1px solid #605e5c;border-radius:2px;background:#fff"></div><svg style="left:50.8px;top:8.3px" width="26.2" height="26.2" viewBox="0 0 32 32" fill="#c3520e"><path d="M14.3 10 C10 11 6 15.4 6.1 21 C6.1 22.4 7 23 8.2 22.8 C11.6 22 14.2 19.6 14.8 16.4 C15.1 14.4 15 11.6 14.3 10 Z"/><path d="M17.7 10 C22 11 26 15.4 25.9 21 C25.9 22.4 25 23 23.8 22.8 C20.4 22 17.8 19.6 17.2 16.4 C16.9 14.4 17 11.6 17.7 10 Z"/><path d="M16 17.6 C17 19.4 18.2 20.6 19.3 21.6 C18.6 23.4 17.4 24.8 16 25.8 C14.6 24.8 13.4 23.4 12.7 21.6 C13.8 20.6 15 19.4 16 17.6 Z"/><path d="M11.7 8.8 C12.4 6.6 14.2 5.8 16 5.8 C17.8 5.8 19.6 6.6 20.3 8.8 C19 8 17.6 7.7 16.6 7.7 L16.6 9.2 L15.4 9.2 L15.4 7.7 C14.4 7.7 13 8 11.7 8.8 Z"/></svg><div class="id" style="letter-spacing:-0.25px">1194</div><div class="ti" style="letter-spacing:0.07px">Content: Write advertisement content for our website/phone app.</div></div>
  <div class="row" style="top:342px"><svg style="left:50.8px;top:8.3px" width="26.2" height="26.2" viewBox="0 0 32 32" fill="#c3520e"><path d="M14.3 10 C10 11 6 15.4 6.1 21 C6.1 22.4 7 23 8.2 22.8 C11.6 22 14.2 19.6 14.8 16.4 C15.1 14.4 15 11.6 14.3 10 Z"/><path d="M17.7 10 C22 11 26 15.4 25.9 21 C25.9 22.4 25 23 23.8 22.8 C20.4 22 17.8 19.6 17.2 16.4 C16.9 14.4 17 11.6 17.7 10 Z"/><path d="M16 17.6 C17 19.4 18.2 20.6 19.3 21.6 C18.6 23.4 17.4 24.8 16 25.8 C14.6 24.8 13.4 23.4 12.7 21.6 C13.8 20.6 15 19.4 16 17.6 Z"/><path d="M11.7 8.8 C12.4 6.6 14.2 5.8 16 5.8 C17.8 5.8 19.6 6.6 20.3 8.8 C19 8 17.6 7.7 16.6 7.7 L16.6 9.2 L15.4 9.2 L15.4 7.7 C14.4 7.7 13 8 11.7 8.8 Z"/></svg><div class="id" style="letter-spacing:-0.25px">1196</div><div class="ti" style="letter-spacing:-0.11px">Content: Main Page content (Check update)</div></div>
  <div class="row" style="top:384px"><svg style="left:50.8px;top:8.3px" width="26.2" height="26.2" viewBox="0 0 32 32" fill="#c3520e"><path d="M14.3 10 C10 11 6 15.4 6.1 21 C6.1 22.4 7 23 8.2 22.8 C11.6 22 14.2 19.6 14.8 16.4 C15.1 14.4 15 11.6 14.3 10 Z"/><path d="M17.7 10 C22 11 26 15.4 25.9 21 C25.9 22.4 25 23 23.8 22.8 C20.4 22 17.8 19.6 17.2 16.4 C16.9 14.4 17 11.6 17.7 10 Z"/><path d="M16 17.6 C17 19.4 18.2 20.6 19.3 21.6 C18.6 23.4 17.4 24.8 16 25.8 C14.6 24.8 13.4 23.4 12.7 21.6 C13.8 20.6 15 19.4 16 17.6 Z"/><path d="M11.7 8.8 C12.4 6.6 14.2 5.8 16 5.8 C17.8 5.8 19.6 6.6 20.3 8.8 C19 8 17.6 7.7 16.6 7.7 L16.6 9.2 L15.4 9.2 L15.4 7.7 C14.4 7.7 13 8 11.7 8.8 Z"/></svg><div class="id" style="letter-spacing:-0.25px">1193</div><div class="ti" style="letter-spacing:-0.07px">Mobile: User login, create account</div></div>
  <!-- pager -->
  <div class="abs" style="left:0;top:426px;width:960px;height:107px;background:#fafafa"></div>
  <div class="abs" style="left:0;top:468px;width:960px;height:1px;background:#e0e0e0"></div>
  <div class="t" style="left:24px;top:440.2px;font-size:14px;color:#323130;letter-spacing:-0.38px">1 - 7 / 104 items</div>
  <svg style="left:720px;top:437px" width="220" height="20"><g fill="#d4d2d0"><rect x="5.6" y="6" width="1.2" height="8"/><path d="M14.2 6 V14 L7.8 10 Z"/><path d="M41 6.2 V13.8 L35 10 Z"/></g><g fill="#323130"><path d="M175 6 V14 L181.2 10 Z"/><path d="M202 6 V14 L208.2 10 Z"/><rect x="209" y="6" width="1.3" height="8"/></g></svg>
  <div class="abs" style="left:776px;top:437px;width:20px;height:20px;border-radius:3px;background:#77060f"></div>
  <div class="t pg" style="left:776px;color:#fff">1</div>
  <div class="t pg" style="left:804px">2</div>
  <div class="t pg" style="left:832px">3</div>
  <div class="t pg" style="left:860px">4</div>
  <!-- footer -->
  <div class="t" style="left:24px;top:494.4px;font-size:14px;color:#323130;letter-spacing:-0.13px">Your selection items: 0</div>
  <div class="abs" style="left:783px;top:485px;width:88px;height:32px;border:1px solid #9b9997;border-radius:4px;background:#f3f2f1"></div>
  <div class="t" style="left:807.2px;top:494.8px;font-size:14px;color:#323130;letter-spacing:-0.8px">Cancel</div>
  <div class="abs" style="left:879px;top:485px;width:57px;height:32px;border-radius:4px;background:#77060f"></div>
  <div class="t" style="left:895px;top:494.6px;font-size:14px;font-weight:700;color:#fff;letter-spacing:-0.9px">Add</div>
</div>
</body>
</html>
